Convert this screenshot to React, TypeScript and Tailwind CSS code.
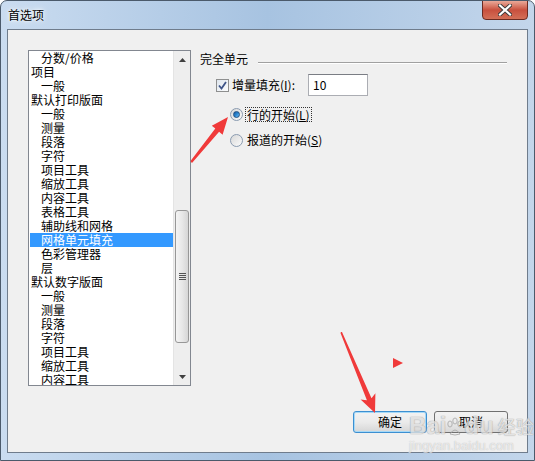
import React from 'react';

type Item = { label: string; sub?: boolean; selected?: boolean };

const items: Item[] = [
  { label: '分数/价格', sub: true },
  { label: '项目' },
  { label: '一般', sub: true },
  { label: '默认打印版面' },
  { label: '一般', sub: true },
  { label: '测量', sub: true },
  { label: '段落', sub: true },
  { label: '字符', sub: true },
  { label: '项目工具', sub: true },
  { label: '缩放工具', sub: true },
  { label: '内容工具', sub: true },
  { label: '表格工具', sub: true },
  { label: '辅助线和网格', sub: true },
  { label: '网格单元填充', sub: true, selected: true },
  { label: '色彩管理器', sub: true },
  { label: '层', sub: true },
  { label: '默认数字版面' },
  { label: '一般', sub: true },
  { label: '测量', sub: true },
  { label: '段落', sub: true },
  { label: '字符', sub: true },
  { label: '项目工具', sub: true },
  { label: '缩放工具', sub: true },
  { label: '内容工具', sub: true },
];

// Windows 7 style list scrollbar
const ScrollBar = () => (
  <div className="w-[17px] h-full flex flex-col bg-[#eeeeee] border-l border-[#e4e4e4]">
    <div className="h-[17px] flex items-center justify-center">
      <svg width="7" height="4" viewBox="0 0 7 4">
        <path d="M0 4 L3.5 0 L7 4 Z" fill="#404040" />
      </svg>
    </div>
    <div className="h-[142px]" />
    <div className="h-[133px] mx-[1px] rounded-[3px] border border-[#979797] bg-gradient-to-r from-[#f4f4f4] via-[#e8e8e8] to-[#d6d6d6] flex flex-col items-center justify-center gap-[1px]">
      <div className="w-[7px] h-[1px] bg-[#555]" />
      <div className="w-[7px] h-[1px] bg-[#555]" />
      <div className="w-[7px] h-[1px] bg-[#555]" />
      <div className="w-[7px] h-[1px] bg-[#555]" />
    </div>
    <div className="flex-1 flex items-end justify-center pb-[6px]">
      <svg width="7" height="4" viewBox="0 0 7 4">
        <path d="M0 0 L7 0 L3.5 4 Z" fill="#404040" />
      </svg>
    </div>
  </div>
);

const Radio = ({ checked }: { checked?: boolean }) => (
  <div className="w-[13px] h-[13px] rounded-full border border-[#8a9bb0] bg-gradient-to-br from-[#d8d8d8] to-[#fbfbfb] flex items-center justify-center">
    {checked && (
      <div className="w-[7px] h-[7px] rounded-full bg-gradient-to-br from-[#1a5a9c] via-[#2c87d2] to-[#6ec0f2] border border-[#1d4f84]" />
    )}
  </div>
);

export default function App() {
  return (
    <div className="relative w-[535px] h-[461px] flex flex-col overflow-hidden rounded-t-[7px] border border-[#4b5a6b] bg-gradient-to-r from-[#cadcf0] via-[#a7c3e1] to-[#c3d6eb] font-['Noto_Sans_CJK_SC',sans-serif] text-[12px] text-black">
      {/* Title bar */}
      <div className="h-[28px] flex items-start shrink-0">
        <span className="ml-[7px] mt-[5px] leading-[18px] [text-shadow:0_0_6px_#ffffff,0_0_3px_#ffffff]">首选项</span>
        <div className="ml-auto mr-[6px] w-[46px] h-[20px] -mt-[1px] rounded-b-[4px] border border-[#6b2b22] bg-gradient-to-b from-[#e9a999] via-[#c8503e] to-[#d36f57] flex items-center justify-center">
          <svg width="14" height="12" viewBox="0 0 14 12">
            <path d="M2 1.5 L12 10.5 M12 1.5 L2 10.5" stroke="#3b3b3b" strokeWidth="4" strokeLinecap="square" />
            <path d="M2 1.5 L12 10.5 M12 1.5 L2 10.5" stroke="#ffffff" strokeWidth="2.2" strokeLinecap="square" />
          </svg>
        </div>
      </div>

      {/* Client area */}
      <div className="flex-1 ml-[6px] mr-[6px] mb-[7px] border border-[#6f7c8c] bg-[#f0f0f0] flex flex-col">
        <div className="flex items-start pl-[20px] pt-[20px]">
          {/* Category list */}
          <div className="w-[163px] h-[336px] border border-[#828790] bg-white flex">
            <div className="flex-1 pl-[1px] overflow-hidden">
              {items.map((it, i) => (
                <div
                  key={i}
                  className={`h-[14px] leading-[14px] whitespace-nowrap ${it.sub ? 'pl-[11px]' : 'pl-[1px]'} ${it.selected ? 'bg-[#3399ff] text-white' : ''}`}
                >
                  {it.label}
                </div>
              ))}
            </div>
            <ScrollBar />
          </div>

          {/* Settings panel */}
          <div className="ml-[9px] flex flex-col">
            <div className="flex items-start h-[16px] mt-[1px]">
              <span className="leading-[16px]">完全单元</span>
              <div className="ml-[10px] mt-[11px] w-[249px] border-t border-[#a0a0a0] border-b border-b-white" />
            </div>

            <div className="flex items-center mt-[7px] ml-[16px] h-[22px]">
              <div className="w-[13px] h-[13px] border border-[#8e8f8f] bg-gradient-to-br from-[#dfe6ee] to-[#fbfcfd] flex items-center justify-center">
                <svg width="9" height="9" viewBox="0 0 9 9">
                  <path d="M1 4.5 L3.5 7.5 L8 1" stroke="#3e5488" strokeWidth="1.8" fill="none" />
                </svg>
              </div>
              <span className="ml-[3px] w-[76px] leading-[16px]">
                增量填充(<span className="underline">I</span>):
              </span>
              <div className="w-[60px] h-[22px] border border-[#abadb3] border-t-[#7a7d84] bg-white pl-[4px] leading-[20px]">10</div>
            </div>

            <div className="flex items-center mt-[10px] ml-[30px] h-[16px]">
              <Radio checked />
              <span className="ml-[2px] h-[15px] leading-[13px] px-[1px] border border-dotted border-[#333]">
                行的开始(<span className="underline">L</span>)
              </span>
            </div>

            <div className="flex items-center mt-[10px] ml-[30px] h-[16px]">
              <Radio />
              <span className="ml-[3px] leading-[16px] px-[1px]">
                报道的开始(<span className="underline">S</span>)
              </span>
            </div>
          </div>
        </div>

        <div className="flex-1" />

        {/* Buttons */}
        <div className="flex justify-end gap-[7px] pr-[19px] pb-[19px]">
          <button className="w-[74px] h-[22px] rounded-[3px] border border-[#3c8fd1] shadow-[inset_0_0_0_1px_#a6d9f7] bg-gradient-to-b from-[#f2f2f2] via-[#ebebeb] to-[#d6d6d6] leading-[20px]">
            确定
          </button>
          <button className="w-[74px] h-[22px] rounded-[3px] border border-[#707070] bg-gradient-to-b from-[#f2f2f2] via-[#ebebeb] to-[#d6d6d6] leading-[20px]">
            取消
          </button>
        </div>
      </div>

      {/* Baidu watermark */}
      <div className="absolute left-[408px] top-[410px] pointer-events-none flex flex-col items-start opacity-80">
        <div className="flex items-end h-[28px] font-['Liberation_Sans',sans-serif] font-bold text-[24px] leading-[26px] text-white/70 [text-shadow:0_0_1px_#9a9a9a,0_0_1px_#9a9a9a]">
          <span>Bai</span>
          <svg width="18" height="20" viewBox="0 0 18 20" className="mb-[2px]">
            <g fill="none" stroke="#a5a5a5" strokeWidth="1">
              <ellipse cx="4" cy="7" rx="2.2" ry="3" />
              <ellipse cx="9" cy="4" rx="2.2" ry="3" />
              <ellipse cx="14" cy="7" rx="2.2" ry="3" />
              <path d="M4 17 Q9 9 14 17 Q9 19 4 17 Z" />
            </g>
          </svg>
          <span>du</span>
          <span className="ml-[4px] text-[18px] font-normal font-['Noto_Sans_CJK_SC',sans-serif]">经验</span>
        </div>
        <div className="font-['Liberation_Sans',sans-serif] text-[13px] leading-[13px] text-white/70 [text-shadow:0_0_1px_#a0a0a0]">jingyan.baidu.com</div>
      </div>

      {/* Red annotation arrows */}
      <svg className="absolute left-0 top-0 pointer-events-none" width="535" height="461" viewBox="0 0 535 461">
        <polygon
          points="190,161 189.5,160 214.3,127.6 210.8,124.7 227,116 221.6,133.7 218.1,130.8 191,162"
          fill="#f03a3a"
        />
        <polygon
          points="340,331 341,331 370.5,397.2 374.4,392.3 374,412 359.6,398.5 365.9,399.2 339.5,332"
          fill="#f03a3a"
        />
        <polygon points="392,357 402,362 392,367" fill="#f03a3a" />
      </svg>
    </div>
  );
}
